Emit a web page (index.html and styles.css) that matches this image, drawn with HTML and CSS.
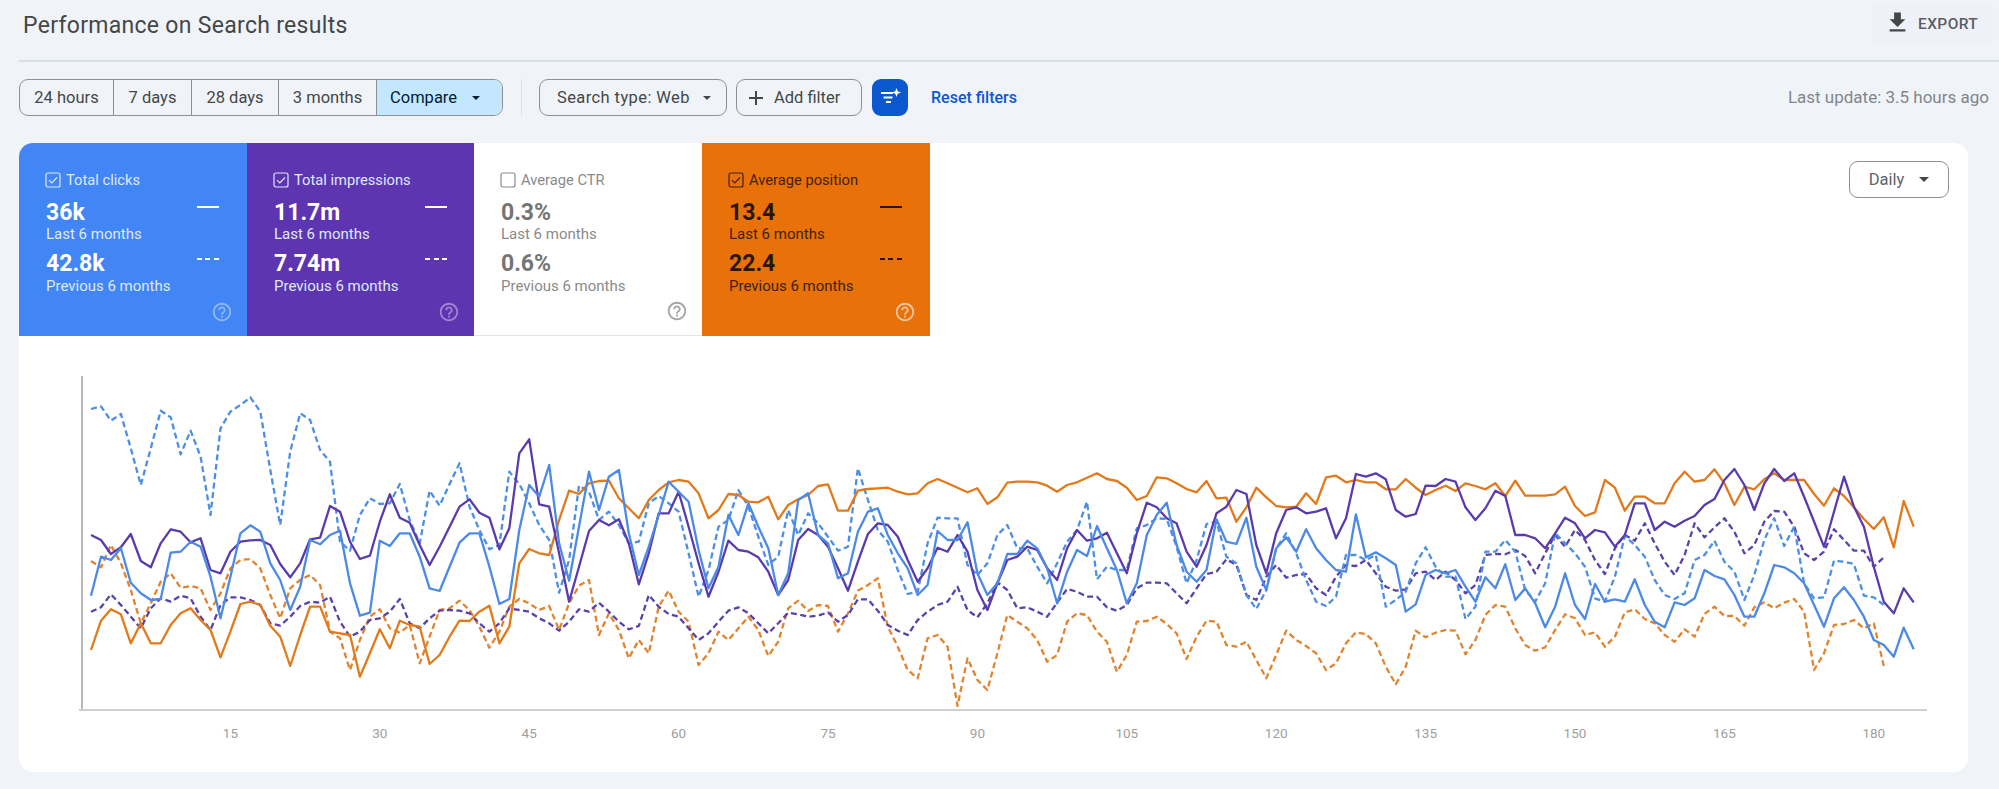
FILE: index.html
```html
<!DOCTYPE html>
<html lang="en">
<head>
<meta charset="utf-8">
<title>Performance on Search results</title>
<link rel="stylesheet" href="styles.css">
</head>
<body>
<header class="page-head">
  <h1 class="page-title">Performance on Search results</h1>
  <button class="export">
    <svg class="export-icon" viewBox="0 0 24 24"><path d="M19 9h-4V3H9v6H5l7 7 7-7zM5 18v2h14v-2H5z"/></svg>
    EXPORT
  </button>
</header>
<section class="toolbar">
  <div class="seg">
    <span class="seg-item w1">24 hours</span>
    <span class="seg-item w2">7 days</span>
    <span class="seg-item w3">28 days</span>
    <span class="seg-item w4">3 months</span>
    <span class="seg-item seg-on">Compare <i class="caret small"></i></span>
  </div>
  <span class="vrule"></span>
  <button class="pill search-type">Search type: Web <i class="caret small"></i></button>
  <button class="pill add-filter">
    <svg class="plus" viewBox="0 0 16 16"><path d="M8 1v14M1 8h14"/></svg>
    Add filter
  </button>
  <button class="spark">
    <svg viewBox="0 0 24 24"><path class="spark-lines" d="M3 8h12M5.500 12.500h9M8 17h5"/><path class="spark-star" d="M18.500 3l1.200 3.300L23 7.500l-3.300 1.200L18.500 12l-1.200-3.300L14 7.500l3.300-1.200z"/></svg>
  </button>
  <a class="reset">Reset filters</a>
  <span class="updated">Last update: 3.5 hours ago</span>
</section>
<main class="card">
  <div class="tiles">
    <article class="tile blue">
      <div class="tile-label"><svg class="cb" viewBox="0 0 16 16"><rect x="1" y="1" width="14" height="14" rx="2"/><path d="M4 8.200l2.800 2.800L12 5.500"/></svg>Total clicks</div>
      <div class="metric"><div><div class="val">36k</div><div class="sub">Last 6 months</div></div><i class="key solid"></i></div>
      <div class="metric"><div><div class="val">42.8k</div><div class="sub">Previous 6 months</div></div><i class="key dash"></i></div>
      <svg class="help" viewBox="0 0 24 24"><path d="M11 18h2v-2h-2v2zm1-16C6.480 2 2 6.480 2 12s4.480 10 10 10 10-4.480 10-10S17.520 2 12 2zm0 18c-4.410 0-8-3.590-8-8s3.590-8 8-8 8 3.590 8 8-3.590 8-8 8zm0-14c-2.210 0-4 1.790-4 4h2c0-1.100.9-2 2-2s2 .9 2 2c0 2-3 1.750-3 5h2c0-2.250 3-2.500 3-5 0-2.210-1.790-4-4-4z"/></svg>
    </article>
    <article class="tile purple">
      <div class="tile-label"><svg class="cb" viewBox="0 0 16 16"><rect x="1" y="1" width="14" height="14" rx="2"/><path d="M4 8.200l2.800 2.800L12 5.500"/></svg>Total impressions</div>
      <div class="metric"><div><div class="val">11.7m</div><div class="sub">Last 6 months</div></div><i class="key solid"></i></div>
      <div class="metric"><div><div class="val">7.74m</div><div class="sub">Previous 6 months</div></div><i class="key dash"></i></div>
      <svg class="help" viewBox="0 0 24 24"><path d="M11 18h2v-2h-2v2zm1-16C6.480 2 2 6.480 2 12s4.480 10 10 10 10-4.480 10-10S17.520 2 12 2zm0 18c-4.410 0-8-3.590-8-8s3.590-8 8-8 8 3.590 8 8-3.590 8-8 8zm0-14c-2.210 0-4 1.790-4 4h2c0-1.100.9-2 2-2s2 .9 2 2c0 2-3 1.750-3 5h2c0-2.250 3-2.500 3-5 0-2.210-1.790-4-4-4z"/></svg>
    </article>
    <article class="tile plain">
      <div class="tile-label"><svg class="cb" viewBox="0 0 16 16"><rect x="1" y="1" width="14" height="14" rx="2"/></svg>Average CTR</div>
      <div class="metric"><div><div class="val">0.3%</div><div class="sub">Last 6 months</div></div></div>
      <div class="metric"><div><div class="val">0.6%</div><div class="sub">Previous 6 months</div></div></div>
      <svg class="help" viewBox="0 0 24 24"><path d="M11 18h2v-2h-2v2zm1-16C6.480 2 2 6.480 2 12s4.480 10 10 10 10-4.480 10-10S17.520 2 12 2zm0 18c-4.410 0-8-3.590-8-8s3.590-8 8-8 8 3.590 8 8-3.590 8-8 8zm0-14c-2.210 0-4 1.790-4 4h2c0-1.100.9-2 2-2s2 .9 2 2c0 2-3 1.750-3 5h2c0-2.250 3-2.500 3-5 0-2.210-1.790-4-4-4z"/></svg>
    </article>
    <article class="tile orange">
      <div class="tile-label"><svg class="cb" viewBox="0 0 16 16"><rect x="1" y="1" width="14" height="14" rx="2"/><path d="M4 8.200l2.800 2.800L12 5.500"/></svg>Average position</div>
      <div class="metric"><div><div class="val">13.4</div><div class="sub">Last 6 months</div></div><i class="key solid"></i></div>
      <div class="metric"><div><div class="val">22.4</div><div class="sub">Previous 6 months</div></div><i class="key dash"></i></div>
      <svg class="help" viewBox="0 0 24 24"><path d="M11 18h2v-2h-2v2zm1-16C6.480 2 2 6.480 2 12s4.480 10 10 10 10-4.480 10-10S17.520 2 12 2zm0 18c-4.410 0-8-3.590-8-8s3.590-8 8-8 8 3.590 8 8-3.590 8-8 8zm0-14c-2.210 0-4 1.790-4 4h2c0-1.100.9-2 2-2s2 .9 2 2c0 2-3 1.750-3 5h2c0-2.250 3-2.500 3-5 0-2.210-1.790-4-4-4z"/></svg>
    </article>
    <div class="tile-rest">
      <button class="daily">Daily <i class="caret"></i></button>
    </div>
  </div>
  <svg id="chart" class="chart" viewBox="19 336 1949 436" width="1949" height="436">
    <line class="axis-y" x1="82" y1="376" x2="82" y2="710"/>
    <line class="axis-x" x1="79" y1="710" x2="1927" y2="710"/>
  </svg>
</main>
<script src="chart.js"></script>
</body>
</html>
```
FILE: styles.css
```css
* { box-sizing: border-box; }
html, body { margin: 0; height: 100%; }
body {
  background: #f0f4f9;
  font-family: Roboto, "Noto Sans", sans-serif;
  color: #444746;
  overflow: hidden;
}
button { font: inherit; color: inherit; background: none; }

.page-head {
  height: 62px;
  margin-left: 19px;
  padding: 3px 6px 0 4px;
  display: flex;
  align-items: flex-start;
  justify-content: space-between;
  border-bottom: 2px solid #d9dfe6;
}
.page-title {
  margin: 0;
  font-size: 23px;
  line-height: 46px;
  font-weight: 400;
  color: #444746;
  letter-spacing: .3px;
}
.export {
  height: 42px;
  width: 121px;
  border: 0;
  border-radius: 4px;
  background: #eef2f8;
  display: flex;
  align-items: center;
  padding: 0 0 0 12px;
  gap: 13px;
  font-size: 15.500px;
  font-weight: 500;
  letter-spacing: .4px;
  color: #5a5e62;
}
.export-icon { width: 27px; height: 27px; fill: #444746; flex: none; margin-top: -4px; margin-right: -6px; }

.toolbar {
  margin-left: 19px;
  padding: 17px 10px 0 0;
  height: 81px;
  display: flex;
  align-items: flex-start;
  font-size: 16.500px;
}
.seg {
  display: flex;
  height: 37px;
  width: 484px;
  border: 1px solid #8e918f;
  border-radius: 9px;
  overflow: hidden;
}
.seg-item {
  display: flex;
  align-items: center;
  justify-content: center;
  gap: 14px;
  border-right: 1px solid #8e918f;
  color: #444746;
  flex: none;
  white-space: nowrap;
}
.w1 { width: 94px; }
.w2 { width: 78px; }
.w3 { width: 87px; }
.w4 { width: 98px; }
.seg-on {
  flex: 1;
  border-right: 0;
  background: #c2e7ff;
  color: #001d35;
  justify-content: flex-start;
  padding-left: 13px;
  gap: 15px;
}
.caret {
  display: inline-block;
  width: 0;
  height: 0;
  border-left: 5px solid transparent;
  border-right: 5px solid transparent;
  border-top: 5px solid #444746;
}
.caret.small { border-left-width: 4px; border-right-width: 4px; border-top-width: 4px; }
.seg-on .caret { border-top-color: #001d35; }
.vrule { width: 1px; height: 37px; background: #dde2e8; margin: 0 17px 0 18px; }
.pill {
  height: 37px;
  border: 1px solid #8e918f;
  border-radius: 9px;
  display: flex;
  align-items: center;
  font-size: 16.500px;
  color: #444746;
  padding: 0;
  background: transparent;
}
.search-type { width: 188px; padding-left: 17px; gap: 13px; letter-spacing: .4px; }
.add-filter { width: 126px; margin-left: 9px; padding-left: 11px; gap: 10px; }
.plus { width: 16px; height: 16px; fill: none; stroke: #444746; stroke-width: 2; flex: none; }
.spark {
  width: 36px;
  height: 37px;
  margin-left: 10px;
  border: 0;
  border-radius: 9px;
  background: #0b57d0;
  padding: 6px;
  display: flex;
}
.spark svg { width: 24px; height: 24px; }
.spark-lines { fill: none; stroke: #fff; stroke-width: 2; }
.spark-star { fill: #fff; }
.reset {
  margin-left: 23px;
  line-height: 37px;
  font-size: 16px;
  font-weight: 500;
  color: #0b57d0;
}
.updated {
  margin-left: auto;
  line-height: 37px;
  font-size: 17px;
  color: #80868b;
}

.card {
  margin-left: 19px;
  width: 1949px;
  height: 629px;
  background: #fff;
  border-radius: 14px;
  overflow: hidden;
}
.tiles { display: flex; height: 193px; }
.tile {
  width: 228px;
  height: 193px;
  flex: none;
  padding: 29px 0 0 27px;
  position: relative;
  font-size: 14.700px;
}
.tile.purple { width: 227px; }
.tile-label { display: flex; align-items: center; gap: 5px; height: 16px; }
.cb { width: 16px; height: 16px; fill: none; stroke: currentColor; stroke-width: 1.200; flex: none; margin-left: -1px; }
.metric { width: 173px; display: flex; justify-content: space-between; align-items: flex-start; }
.tile-label + .metric { margin-top: 12px; }
.metric + .metric { margin-top: 8px; }
.metric + .metric .sub { margin-top: 1px; }
.metric + .metric .key { margin-top: 7px; }
.val { font-size: 23px; line-height: 26px; font-weight: 700; }
.sub { font-size: 15px; line-height: 17px; }
.key { display: block; width: 22px; height: 2px; margin-top: 6px; background: currentColor; flex: none; }
.key.dash { background: repeating-linear-gradient(90deg, currentColor 0 5px, transparent 5px 8.500px); }
.help { position: absolute; right: 14px; bottom: 13px; width: 22px; height: 22px; fill: currentColor; opacity: .4; }

.blue { background: #4285f4; color: #fff; }
.purple { background: #5e35b1; color: #fff; }
.orange { background: #e8710a; color: #2a1606; }
.orange .help { color: #fff; opacity: .6; }
.blue .tile-label, .purple .tile-label, .blue .sub, .purple .sub { color: #dfe9fc; }
.orange .tile-label, .orange .sub { color: #40210a; }
.plain { background: #fff; color: #757575; border-bottom: 1px solid #e3e3e3; }
.plain .tile-label, .plain .sub { color: #8a8a8a; }
.plain .help { opacity: .65; }

.tile-rest { flex: 1; display: flex; justify-content: flex-end; padding: 18px 19px 0 0; }
.daily {
  width: 100px;
  height: 37px;
  border: 1px solid #8e918f;
  border-radius: 9px;
  display: flex;
  align-items: center;
  justify-content: center;
  gap: 15px;
  font-size: 16.500px;
  color: #5f6368;
}

.chart { display: block; }
.axis-y { stroke: #a0a0a0; stroke-width: 1.500; }
.axis-x { stroke: #cfcfcf; stroke-width: 2; }
.tick { font-size: 13.500px; fill: #9e9e9e; text-anchor: middle; font-family: Roboto, sans-serif; }
.line { fill: none; stroke-width: 2.300; stroke-linejoin: round; }
.line.dashed { stroke-dasharray: 6 3.500; }
.s-blue { stroke: #4c8ae6; }
.s-blue-d { stroke: #4d8fe3; }
.s-purple { stroke: #5a3bae; }
.s-purple-d { stroke: #5b42ab; }
.s-orange { stroke: #e27a1c; }
.s-orange-d { stroke: #e08430; }
```
FILE: chart.js
```js
// Each segment: [first day index, y origin, values at 3x scale]
var SERIES = [
  { cls: 's-orange-d', dashed: true, segs: [
    [0, 360, [603,622,555,610,690,790,730,665,640,683,678,685,750,700,625,600,597,625,705,775,685,660,645,675,815,835,930,840,770,748,805,818,795,910,830,750,745,722,750,800,863,815,740,717,730,750]],
    [46, 420, [558,630,550,497,480,645,580,630,715,660,700,560,512,575,605,735,700,635,660,625,590,630,708,665,565,542,573,555,558,635,580,512,495,475,620,680,750,775,655,645,680,858,715,780,810,700,585,605]],
    [94, 420, [625,660,725,705,605,580,585,635,665,755,705,605,603,590,612,640,717,650,602,605,675,680,665,720,775,705,632,660,678,700,750,730,670,637,642,670,740,793,740,632,652,638,630,632,703,660]],
    [140, 420, [585,555,560,625,675,692,682,630,583,595,645,637,680,650,577,568,597,610,645,665,628,650,582,560,588,588,617,562,547,565,548,537,575,750,700,615,612,600,625,610,738]]
  ]},
  { cls: 's-purple-d', dashed: true, segs: [
    [0, 360, [755,742,703,735,770,805,745,715,725,707,715,770,810,735,712,712,720,735,790,797,770,738,725,728,710,785,830,815,780,775,755,717,790,805,775,752,750,752,760,790,815,790,745,750,755,775]],
    [46, 420, [610,632,605,568,575,548,575,605,628,618,525,560,582,590,625,660,640,605,572,562,580,610,640,610,578,583,590,587,577,605,585,538,538,572,615,632,645,600,575,555,545,500,570,592,550,487,510,565]],
    [94, 420, [562,575,590,548,507,515,530,530,562,572,555,505,488,488,490,520,550,505,462,455,418,435,525,540,470,435,473,465,462,505,525,470,435,438,420,460,500,512,508,460,455,480,455,480,520,495]],
    [140, 420, [405,402,403,390,408,460,400,345,380,330,360,420,462,385,345,362,310,370,425,465,405,310,352,322,295,335,400,375,305,273,275,320,400,420,395,328,360,392,392,440,412]]
  ]},
  { cls: 's-blue-d', dashed: true, segs: [
    [0, 360, [147,139,182,162,265,375,265,152,172,283,212,290,465,205,155,135,112,155,330,495,275,160,180,270,305,545,572,465,415,432,430,372,480,550,392,437,372,310,440,510,568,555,335,372,430,495]],
    [46, 420, [360,518,420,197,215,300,275,315,370,365,250,228,250,275,400,530,450,320,300,210,260,350,435,410,270,345,280,310,350,392,380,145,240,330,365,450,522,515,370,293,295,295,435,465,430,345,315,385]],
    [94, 420, [385,440,490,430,365,330,245,478,440,450,450,325,315,295,297,380,490,420,312,305,410,430,525,567,510,385,340,400,480,545,558,530,405,405,420,405,560,540,515,430,382,440,470,470,597,560]],
    [140, 420, [395,395,360,395,510,545,490,340,370,400,440,535,545,470,348,375,410,480,525,537,520,420,405,362,425,455,540,465,360,295,378,320,490,535,532,422,425,432,527,532,555]]
  ]},
  { cls: 's-orange', segs: [
    [0, 360, [870,782,748,763,850,790,850,850,795,760,745,780,810,892,815,732,725,735,797,830,918,825,740,740,815,820,825,950,880,808,865,782,795,800,912,885,830,782,783,755,737,850,800,610,567,580]],
    [46, 420, [405,300,212,222,190,183,182,235,265,295,240,210,187,180,185,220,295,270,222,225,245,247,230,298,255,238,225,198,193,272,272,212,207,205,203,215,223,220,190,177,190,203,217,205,252,232,188,185]],
    [94, 420, [185,187,197,215,195,187,173,160,177,183,203,240,228,172,175,190,207,217,183,235,233,305,262,203,232,258,262,260,220,252,172,167,187,180,187,187,208,208,177,203,225,210,197,213,190,198]],
    [140, 420, [208,190,228,182,227,227,227,223,200,258,288,277,180,203,272,230,230,250,250,190,155,185,180,148,190,255,200,208,178,160,180,180,180,222,257,205,228,262,297,327,292,382,243,320]]
  ]},
  { cls: 's-purple', segs: [
    [0, 360, [525,540,582,562,522,603,622,550,508,515,547,535,630,640,575,545,541,540,555,612,652,610,538,533,438,455,545,597,587,485,403,473,488,555,615,560,500,440,418,458,473,568,505,280,238,433]],
    [46, 420, [260,400,545,440,333,300,316,298,370,493,400,280,280,215,320,430,530,455,362,390,395,412,455,525,480,360,327,345,380,445,512,425,342,310,315,350,420,485,445,383,395,345,395,510,570,490,420,410]],
    [94, 420, [380,390,445,480,385,330,362,355,338,400,460,340,248,262,295,310,395,440,375,280,260,210,222,375,460,340,270,262,280,275,265,355,295,162,170,160,178,270,290,282,197,198,177,185,262,300]],
    [140, 420, [265,212,228,345,345,355,385,340,293,310,355,330,337,380,345,250,250,330,305,320,302,288,255,237,180,147,195,270,190,147,183,160,230,305,380,275,170,260,320,440,545,580,505,547]]
  ]},
  { cls: 's-blue', segs: [
    [0, 360, [707,590,600,565,668,700,720,717,578,575,545,560,650,775,650,520,496,515,610,660,750,680,540,553,525,512,670,767,758,542,558,520,520,590,685,693,620,548,520,520,620,732,717,510,375,410]],
    [46, 420, [135,370,482,320,155,270,170,150,340,465,380,285,185,215,245,390,505,440,285,345,250,320,385,525,460,240,220,345,370,475,460,335,275,265,345,400,445,525,495,333,360,360,307,460,525,490,402,402]],
    [94, 420, [362,385,445,550,455,390,408,318,385,450,550,490,345,285,248,375,455,485,450,298,365,372,293,440,510,385,352,395,328,385,420,450,455,283,412,397,415,435,575,553,465,450,460,450,500,545]],
    [140, 420, [472,505,433,540,505,550,622,560,460,555,597,492,545,538,545,478,555,605,622,547,555,535,450,468,478,525,590,590,520,435,442,460,490,555,620,535,502,540,590,660,675,710,623,688]]
  ]}
];

var NS = 'http://www.w3.org/2000/svg';
var chart = document.getElementById('chart');
var X0 = 91, STEP = 9.96;

SERIES.forEach(function (s) {
  var pts = [];
  s.segs.forEach(function (seg) {
    seg[2].forEach(function (v, k) {
      var x = X0 + (seg[0] + k) * STEP;
      var y = seg[1] + v / 3;
      pts.push(x.toFixed(1) + ',' + y.toFixed(1));
    });
  });
  var line = document.createElementNS(NS, 'polyline');
  line.setAttribute('points', pts.join(' '));
  line.setAttribute('class', 'line ' + s.cls + (s.dashed ? ' dashed' : ''));
  chart.appendChild(line);
});

for (var d = 15; d <= 180; d += 15) {
  var t = document.createElementNS(NS, 'text');
  t.setAttribute('x', (X0 + (d - 1) * STEP).toFixed(1));
  t.setAttribute('y', '738');
  t.setAttribute('class', 'tick');
  t.textContent = d;
  chart.appendChild(t);
}
```
